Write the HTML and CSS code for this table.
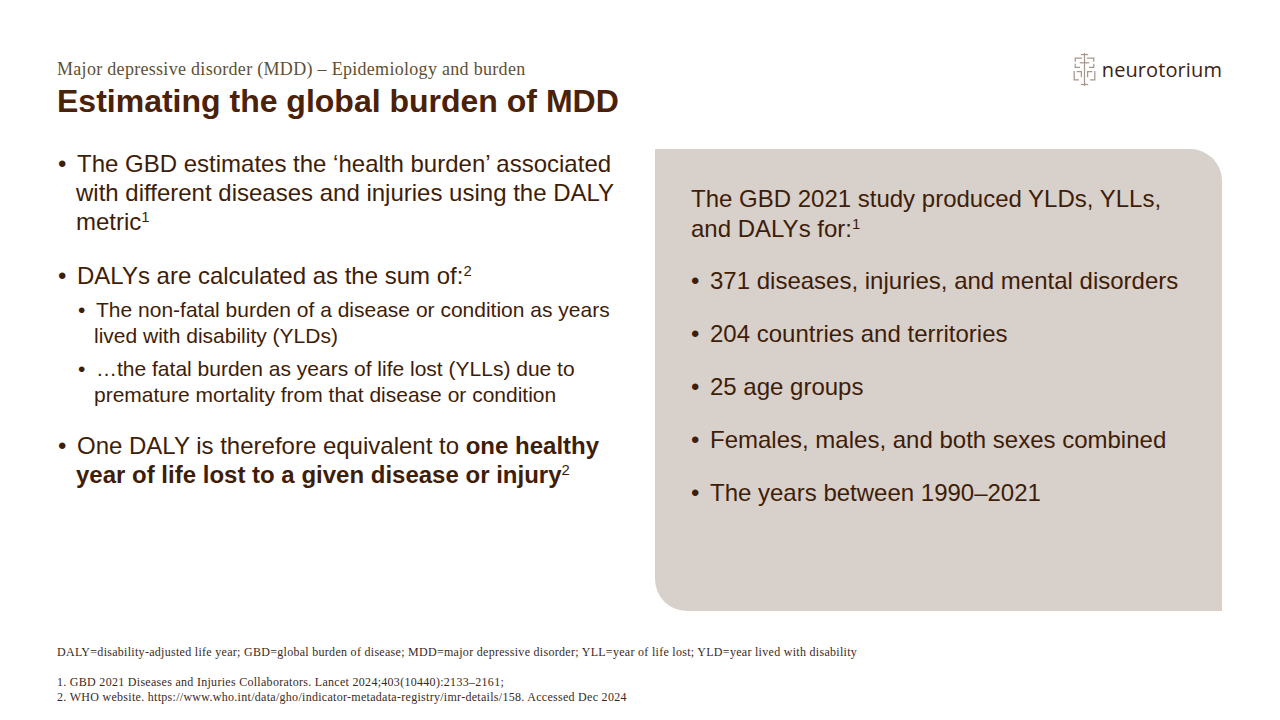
FILE: index.html
```html
<!DOCTYPE html>
<html lang="en">
<head>
<meta charset="utf-8">
<title>Estimating the global burden of MDD</title>
<link rel="stylesheet" href="styles.css">
</head>
<body>
<div class="slide">
  <header class="head">
    <div class="titles">
      <div class="kicker">Major depressive disorder (MDD) – Epidemiology and burden</div>
      <h1 class="title">Estimating the global burden of MDD</h1>
    </div>
    <div class="logo">
      <svg class="logo-icon" viewBox="0 0 24 32" width="25" height="33" aria-hidden="true">
        <g fill="none" stroke="#a8968b" stroke-width="1.2" stroke-linecap="square">
          <path d="M12 0.5 V31.5"/>
          <path d="M9 1.5 H15"/>
          <path d="M3 8 V5 H9"/>
          <path d="M21 8 V5 H15"/>
          <path d="M3 11 V14 H7"/>
          <path d="M21 11 V14 H17"/>
          <path d="M8 9.5 H16"/>
          <path d="M2 18 V26 H6"/>
          <path d="M22 18 V26 H18"/>
          <path d="M5 18 H9 V23"/>
          <path d="M19 18 H15 V23"/>
          <path d="M9 30.5 H15"/>
        </g>
      </svg>
      <span class="logo-text">neurotorium</span>
    </div>
  </header>

  <main class="content">
    <section class="left">
      <ul class="bullets">
        <li>The GBD estimates the ‘health burden’ associated with different diseases and injuries using the DALY metric<sup>1</sup></li>
        <li>DALYs are calculated as the sum of:<sup>2</sup>
          <ul class="sub">
            <li>The non-fatal burden of a disease or condition as years lived with disability (YLDs)</li>
            <li>…the fatal burden as years of life lost (YLLs) due to premature mortality from that disease or condition</li>
          </ul>
        </li>
        <li>One DALY is therefore equivalent to <strong>one healthy year of life lost to a given disease or injury</strong><sup>2</sup></li>
      </ul>
    </section>
    <aside class="panel">
      <p class="panel-lead">The GBD 2021 study produced YLDs, YLLs, and DALYs for:<sup>1</sup></p>
      <ul class="panel-list">
        <li>371 diseases, injuries, and mental disorders</li>
        <li>204 countries and territories</li>
        <li>25 age groups</li>
        <li>Females, males, and both sexes combined</li>
        <li>The years between 1990–2021</li>
      </ul>
    </aside>
  </main>

  <footer class="foot">
    <p class="abbr">DALY=disability-adjusted life year; GBD=global burden of disease; MDD=major depressive disorder; YLL=year of life lost; YLD=year lived with disability</p>
    <ol class="refs">
      <li>1. GBD 2021 Diseases and Injuries Collaborators. Lancet 2024;403(10440):2133–2161;</li>
      <li>2. WHO website. https://www.who.int/data/gho/indicator-metadata-registry/imr-details/158. Accessed Dec 2024</li>
    </ol>
  </footer>
</div>
</body>
</html>
```

FILE: styles.css
```css
* { box-sizing: border-box; }
html, body { margin: 0; padding: 0; background: #ffffff; }

.slide {
  width: 1280px;
  height: 720px;
  padding: 0 58px 0 57px;
  display: flex;
  flex-direction: column;
  overflow: hidden;
  font-family: "Liberation Sans", Arial, sans-serif;
  color: #3e1d09;
}

/* header */
.head {
  display: flex;
  justify-content: space-between;
  align-items: flex-start;
  padding-top: 53px;
}
.titles { padding-top: 6px; }
.kicker {
  font-family: "Liberation Serif", "Times New Roman", serif;
  font-size: 18px;
  line-height: 21px;
  letter-spacing: 0.3px;
  color: #5e5032;
}
.title {
  margin: 3px 0 0;
  font-size: 32px;
  line-height: 36px;
  font-weight: 700;
  color: #4a2109;
}
.logo {
  display: flex;
  align-items: center;
  gap: 5px;
}
.logo-icon { display: block; flex: none; }
.logo-text {
  font-family: "Open Sans", "Liberation Sans", sans-serif;
  font-size: 20px;
  line-height: 24px;
  color: #3d2213;
  letter-spacing: 0.1px;
}

/* content */
.content {
  display: flex;
  gap: 25px;
  margin-top: 30px;
}
.left { width: 573px; flex: none; }

ul { list-style: none; margin: 0; padding: 0; }

.bullets > li {
  font-size: 24px;
  line-height: 29px;
  padding-left: 19px;
  text-indent: -19px;
}
.bullets > li:nth-child(2) { margin-top: 25px; }
.bullets > li:nth-child(3) { margin-top: 23px; }
.bullets > li::before,
.sub > li::before,
.panel-list > li::before {
  content: "•";
  display: inline-block;
  text-indent: 0;
}
.bullets > li::before { width: 19px; padding-left: 1px; }

.sub { margin-top: 7px; }
.sub > li {
  font-size: 21px;
  line-height: 26px;
  padding-left: 18px;
  text-indent: -18px;
}
.sub > li + li { margin-top: 7px; }
.sub > li::before { width: 18px; padding-left: 2px; }

sup {
  font-size: 62%;
  line-height: 0;
  vertical-align: 0.55em;
}
strong { font-weight: 700; }

.panel {
  width: 567px;
  height: 462px;
  flex: none;
  background: #d8d0ca;
  border-radius: 0 32px 0 32px;
  padding: 35px 30px 0 36px;
}
.panel-lead {
  margin: 0;
  font-size: 24px;
  line-height: 30px;
}
.panel-list { margin-top: 22px; }
.panel-list > li {
  font-size: 24px;
  line-height: 30px;
  padding-left: 19px;
  text-indent: -19px;
}
.panel-list > li + li { margin-top: 23px; }
.panel-list > li::before { width: 19px; padding-left: 0; }

/* footer */
.foot {
  margin-top: 34px;
  font-family: "Liberation Serif", "Times New Roman", serif;
  font-size: 12px;
  line-height: 15px;
  letter-spacing: 0.29px;
  color: #3b2a1c;
}
.abbr { margin: 0; }
.refs { list-style: none; margin: 15px 0 0; padding: 0; }
```
